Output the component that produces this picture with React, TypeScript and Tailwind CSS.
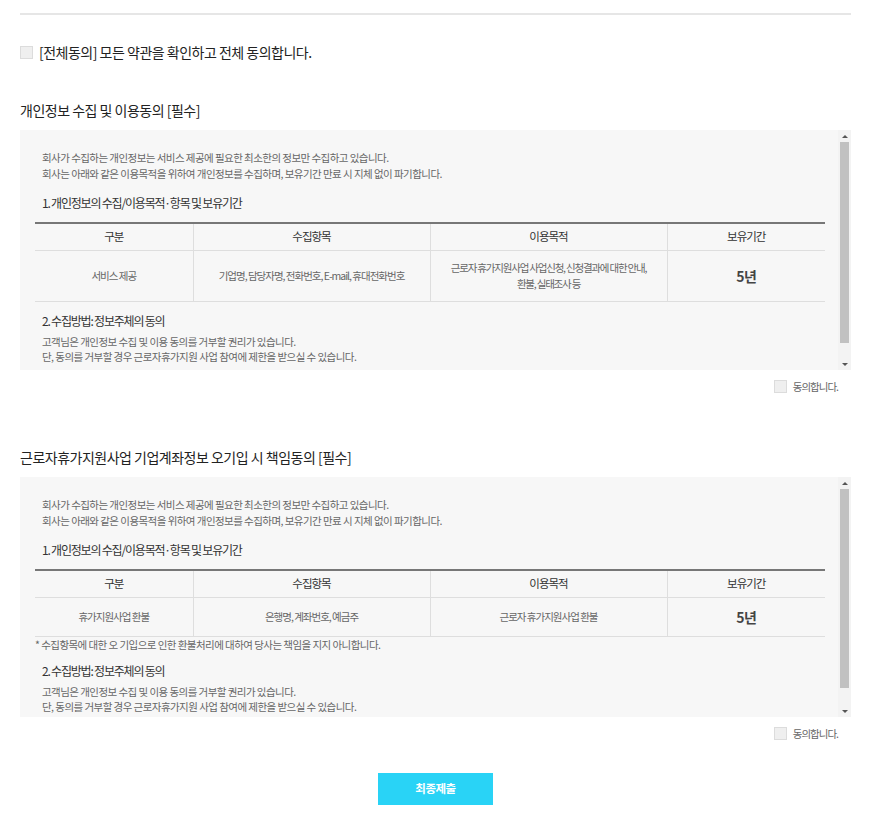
import React from "react";

const font = { fontFamily: '"Noto Sans CJK KR", "Noto Sans", sans-serif' };

function Check() {
  return <span className="inline-block w-[13px] h-[13px] bg-[#efefef] border border-[#dcdcdc] shrink-0" />;
}

function ScrollBar({ thumb }: { thumb: number }) {
  return (
    <div className="w-[13px] h-full flex flex-col bg-[#f3f3f3] shrink-0">
      <div className="h-[12px] flex items-center justify-center">
        <span className="block w-0 h-0 border-l-[3px] border-r-[3px] border-b-[3px] border-l-transparent border-r-transparent border-b-[#555]" />
      </div>
      <div className="flex-1 px-[2px]">
        <div className="w-full bg-[#c1c1c1]" style={{ height: thumb }} />
      </div>
      <div className="h-[12px] flex items-center justify-center">
        <span className="block w-0 h-0 border-l-[3px] border-r-[3px] border-t-[3px] border-l-transparent border-r-transparent border-t-[#555]" />
      </div>
    </div>
  );
}

function Intro() {
  return (
    <div className="pl-[7px] text-[10.5px] leading-[16px] tracking-[-0.55px] text-[#666]">
      <p>회사가 수집하는 개인정보는 서비스 제공에 필요한 최소한의 정보만 수집하고 있습니다.</p>
      <p>회사는 아래와 같은 이용목적을 위하여 개인정보를 수집하며, 보유기간 만료 시 지체 없이 파기합니다.</p>
      <p className="mt-[12px] text-[12px] leading-[18px] tracking-[-1.2px] text-[#333]">1. 개인정보의 수집/이용목적·항목 및 보유기간</p>
    </div>
  );
}

function Outro() {
  return (
    <div className="pl-[7px]">
      <p className="text-[12px] leading-[18px] tracking-[-1.2px] text-[#333]">2. 수집방법: 정보주체의 동의</p>
      <div className="mt-[4px] text-[10.5px] leading-[15px] tracking-[-0.55px] text-[#666]">
        <p>고객님은 개인정보 수집 및 이용 동의를 거부할 권리가 있습니다.</p>
        <p>단, 동의를 거부할 경우 근로자휴가지원 사업 참여에 제한을 받으실 수 있습니다.</p>
      </div>
    </div>
  );
}

function Table({ cells }: { cells: React.ReactNode[] }) {
  const heads = ["구분", "수집항목", "이용목적", "보유기간"];
  const widths = ["w-[20%]", "w-[30%]", "w-[30%]", "w-[20%]"];
  return (
    <table className="w-full border-collapse table-fixed border-t-2 border-t-[#777]">
      <thead>
        <tr className="border-b border-[#dedede]">
          {heads.map((h, i) => (
            <th
              key={h}
              className={`${widths[i]} h-[27px] font-normal text-[11.5px] tracking-[-1px] text-[#333] text-center ${i < 3 ? "border-r border-[#dedede]" : ""}`}
            >
              {h}
            </th>
          ))}
        </tr>
      </thead>
      <tbody>
        <tr className="border-b border-[#dedede]">
          {cells.map((c, i) => (
            <td
              key={i}
              className={`py-[9px] text-center align-middle text-[10.5px] leading-[16px] tracking-[-1px] text-[#666] ${i < 3 ? "border-r border-[#dedede]" : ""}`}
            >
              {c}
            </td>
          ))}
        </tr>
      </tbody>
    </table>
  );
}

const FiveYears = <span className="text-[14px] leading-[20px] font-bold text-[#444] tracking-[-0.5px]">5년</span>;

function Box({ children, thumb }: { children: React.ReactNode; thumb: number }) {
  return (
    <div className="mt-[11px] h-[240px] bg-[#f7f7f7] flex">
      <div className="flex-1 overflow-hidden pt-[20px] pl-[15px] pr-[13px]">{children}</div>
      <ScrollBar thumb={thumb} />
    </div>
  );
}

function Agree() {
  return (
    <div className="mt-[10px] flex items-center justify-end gap-[6px] pr-[13px] h-[13px]">
      <Check />
      <span className="text-[10.5px] tracking-[-1px] text-[#666] leading-[13px]">동의합니다.</span>
    </div>
  );
}

export default function App() {
  return (
    <div className="min-h-[835px] w-full bg-white px-[20px] pt-[13px] pb-[30px]" style={font}>
      <div className="h-[2px] bg-[#e6e6e6]" />
      <div className="mt-[28px] flex items-center gap-[6px] h-[18px]">
        <Check />
        <span className="text-[14px] leading-[18px] tracking-[-0.5px] text-[#222]">[전체동의] 모든 약관을 확인하고 전체 동의합니다.</span>
      </div>

      <h2 className="mt-[40px] text-[14px] leading-[18px] tracking-[-0.5px] text-[#222] font-normal">개인정보 수집 및 이용동의 [필수]</h2>
      <Box thumb={201}>
        <Intro />
        <div className="mt-[10px]">
          <Table
            cells={[
              "서비스 제공",
              "기업명, 담당자명, 전화번호, E-mail, 휴대전화번호",
              <span className="tracking-[-1.2px]">
                근로자 휴가지원사업 사업신청, 신청결과에 대한 안내,
                <br />
                환불, 실태조사 등
              </span>,
              FiveYears,
            ]}
          />
        </div>
        <div className="mt-[10px]">
          <Outro />
        </div>
      </Box>
      <Agree />

      <h2 className="mt-[55px] text-[14px] leading-[18px] tracking-[-0.5px] text-[#222] font-normal">근로자휴가지원사업 기업계좌정보 오기입 시 책임동의 [필수]</h2>
      <Box thumb={199}>
        <Intro />
        <div className="mt-[10px]">
          <Table cells={["휴가지원사업 환불", "은행명, 계좌번호, 예금주", "근로자 휴가지원사업 환불", FiveYears]} />
        </div>
        <p className="text-[10.5px] leading-[16px] tracking-[-0.55px] text-[#666]">* 수집항목에 대한 오 기입으로 인한 환불처리에 대하여 당사는 책임을 지지 아니합니다.</p>
        <div className="mt-[9px]">
          <Outro />
        </div>
      </Box>
      <Agree />

      <div className="mt-[33px] flex justify-center">
        <button className="w-[115px] h-[32px] bg-[#29d3f6] text-white text-[11.5px] font-bold tracking-[-0.5px]">최종제출</button>
      </div>
    </div>
  );
}
